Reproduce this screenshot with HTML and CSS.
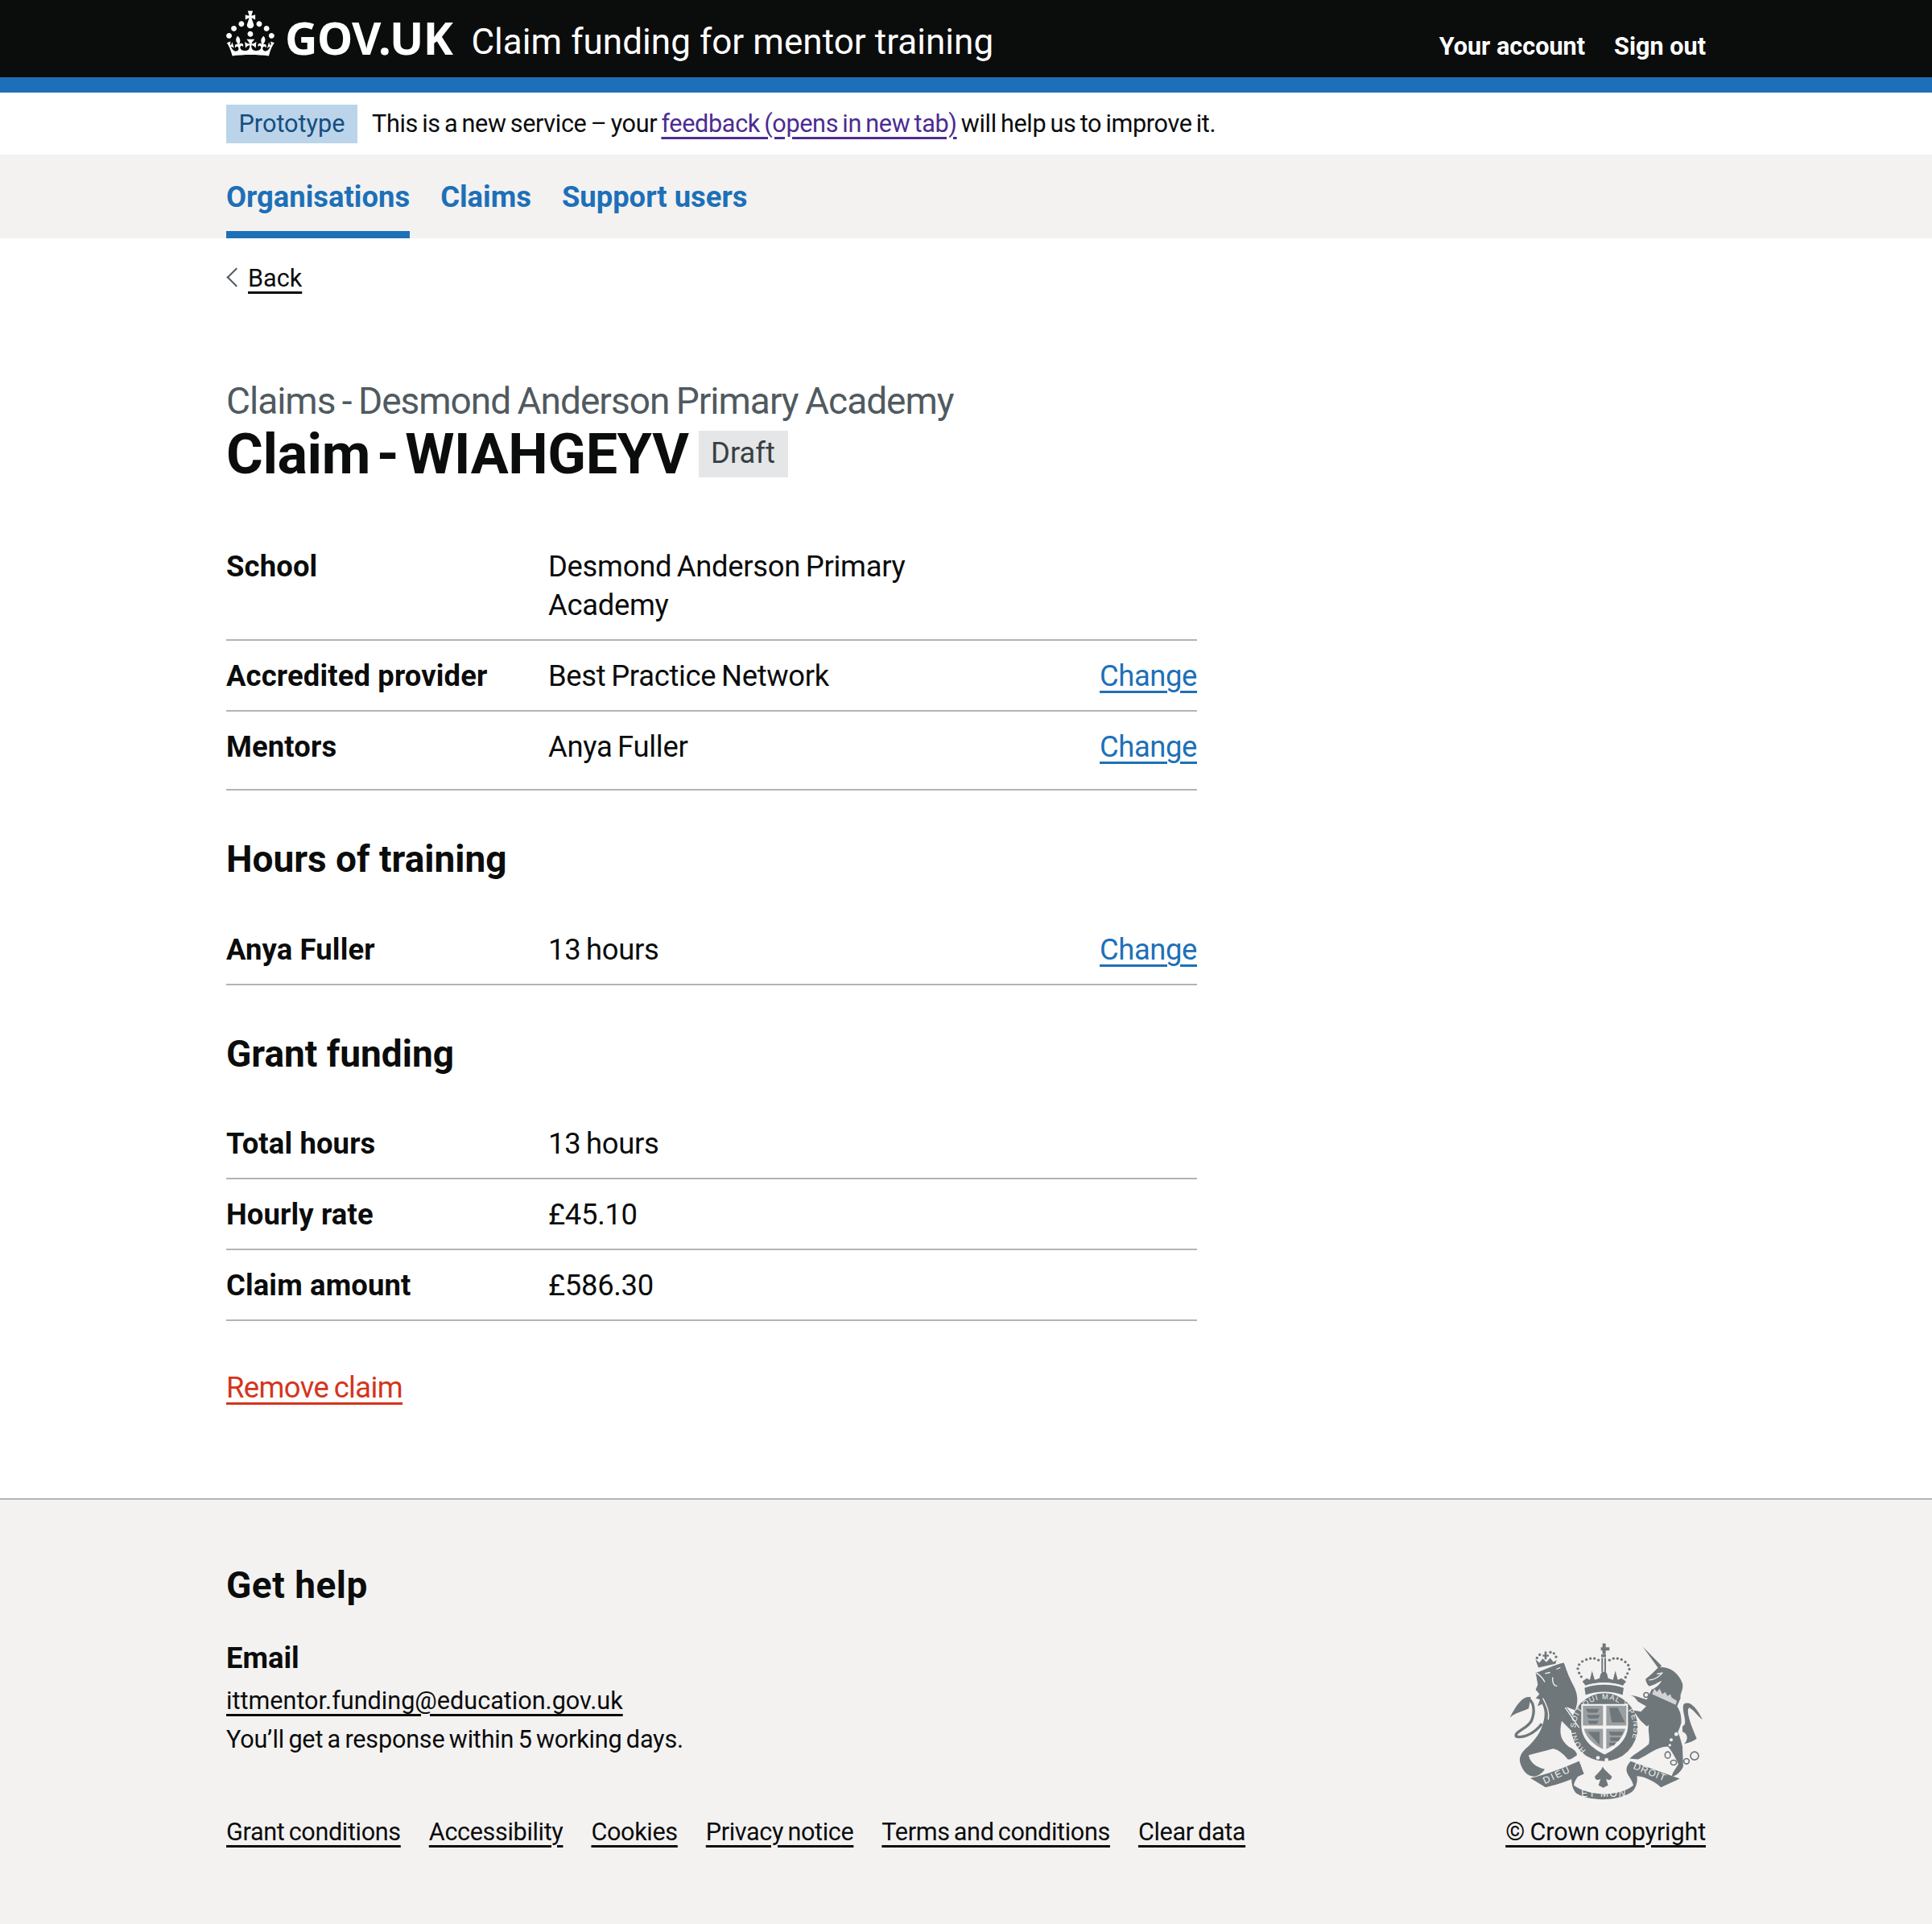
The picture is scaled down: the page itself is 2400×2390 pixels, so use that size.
FILE: index.html
```html
<!DOCTYPE html>
<html lang="en">
<head>
<meta charset="UTF-8">
<title>Claim - WIAHGEYV - Claim funding for mentor training</title>
<link rel="stylesheet" href="styles.css">
</head>
<body>
    <header class="site-header">
        <div class="container header-inner">
            <div class="header-brand">
                <svg class="crown" viewBox="0 0 32.6 30.5" aria-hidden="true"><path fill="#fff" d="M22.6 10.4c-1 .4-2-.1-2.4-1-.4-.9.1-2 1-2.4.9-.4 2 .1 2.4 1s-.1 2-1 2.4m-5.9 6.7c-.9.4-2-.1-2.4-1-.4-.9.1-2 1-2.4.9-.4 2 .1 2.4 1s-.1 2-1 2.4m10.8-3.7c-1 .4-2-.1-2.4-1-.4-.9.1-2 1-2.4.9-.4 2 .1 2.4 1s0 2-1 2.4m3.3 4.8c-1 .4-2-.1-2.4-1-.4-.9.1-2 1-2.4.9-.4 2 .1 2.4 1s-.1 2-1 2.4M17 4.7l2.3 1.2V2.5l-2.3.7-.2-.2.9-3h-3.4l.9 3-.2.2c-.1.1-2.3-.7-2.3-.7v3.4L15 4.7c.1.1.1.2.2.2l-1.3 4c-.1.2-.1.4-.1.6 0 1.1.8 2 1.9 2.2h.7c1-.2 1.9-1.1 1.9-2.2 0-.2 0-.4-.1-.6l-1.3-4c-.1-.1 0-.2.1-.2m-7.6 5.7c.9.4 2-.1 2.4-1 .4-.9-.1-2-1-2.4-.9-.4-2 .1-2.4 1s0 2 1 2.4m-5 3c.9.4 2-.1 2.4-1 .4-.9-.1-2-1-2.4-.9-.4-2 .1-2.4 1s.1 2 1 2.4m-3.2 4.8c.9.4 2-.1 2.4-1 .4-.9-.1-2-1-2.4-.9-.4-2 .1-2.4 1s0 2 1 2.4m14.8 11c4.4 0 8.6.3 12.3.8 1.1-4.5 2.4-7 3.7-8.8l-2.5-.9c.2 1.3.3 1.9 0 2.7-.4-.4-.8-1.1-1.1-2.3l-1.2 4c.7-.5 1.3-.8 2-.9-1.1 2.5-2.6 3.1-3.5 3-1.1-.2-1.7-1.2-1.5-2.1.3-1.2 1.5-1.5 2.1-.1 1.1-2.3-.8-3-2-2.3 1.9-1.9 2.1-3.5.6-5.6-2.1 1.6-2.1 3.2-1.2 5.5-1.2-1.4-3.2-.6-2.5 1.6.9-1.4 2.1-.5 1.9.8-.2 1.1-1.7 2.1-3.5 1.9-2.7-.2-2.9-2.1-2.9-3.6.7-.1 1.9.5 2.9 1.9l.4-4.3c-1.1 1.1-2.1 1.4-3.2 1.4.4-1.2 2.1-3 2.1-3h-5.4s1.7 1.9 2.1 3c-1.1 0-2.1-.2-3.2-1.4l.4 4.3c1-1.4 2.2-2 2.9-1.9-.1 1.5-.2 3.4-2.9 3.6-1.9.2-3.4-.8-3.5-1.9-.2-1.3 1-2.2 1.9-.8.7-2.3-1.2-3-2.5-1.6.9-2.2.9-3.9-1.2-5.5-1.5 2-1.3 3.7.6 5.6-1.2-.7-3.1 0-2 2.3.6-1.4 1.8-1.1 2.1.1.2.9-.3 1.9-1.5 2.1-.9.2-2.4-.5-3.5-3 .6 0 1.2.3 2 .9l-1.2-4c-.3 1.1-.7 1.9-1.1 2.3-.3-.8-.2-1.4 0-2.7l-2.5.9c1.3 1.7 2.5 4.3 3.7 8.8 3.7-.5 7.9-.8 12.3-.8"/></svg>
                <a class="logotype" href="#">GOV.UK</a>
                <a class="service-name" href="#">Claim funding for mentor training</a>
            </div>
            <nav class="header-nav">
                <a href="#">Your account</a>
                <a href="#">Sign out</a>
            </nav>
        </div>
    </header>

    <div class="container phase-banner">
        <strong class="phase-tag">Prototype</strong>
        <span class="phase-text">This is a new service – your <a href="#">feedback (opens in new tab)</a> will help us to improve it.</span>
    </div>

    <nav class="primary-nav">
        <div class="container primary-nav-inner">
            <a class="nav-item nav-current" href="#">Organisations</a>
            <a class="nav-item" href="#">Claims</a>
            <a class="nav-item" href="#">Support users</a>
        </div>
    </nav>

    <div class="container">
        <a class="back-link" href="#">Back</a>

        <main class="main">
            <span class="caption">Claims - Desmond Anderson Primary Academy</span>
            <h1 class="page-title"><span>Claim - WIAHGEYV</span><strong class="draft-tag">Draft</strong></h1>

            <dl class="summary summary-first">
                <div class="row">
                    <dt>School</dt>
                    <dd>Desmond Anderson Primary Academy</dd>
                </div>
                <div class="row">
                    <dt>Accredited provider</dt>
                    <dd>Best Practice Network</dd>
                    <dd class="action"><a href="#">Change</a></dd>
                </div>
                <div class="row row-tall">
                    <dt>Mentors</dt>
                    <dd>Anya Fuller</dd>
                    <dd class="action"><a href="#">Change</a></dd>
                </div>
            </dl>

            <h2 class="section-title">Hours of training</h2>
            <dl class="summary">
                <div class="row">
                    <dt>Anya Fuller</dt>
                    <dd>13 hours</dd>
                    <dd class="action"><a href="#">Change</a></dd>
                </div>
            </dl>

            <h2 class="section-title section-grant">Grant funding</h2>
            <dl class="summary">
                <div class="row">
                    <dt>Total hours</dt>
                    <dd>13 hours</dd>
                </div>
                <div class="row">
                    <dt>Hourly rate</dt>
                    <dd>£45.10</dd>
                </div>
                <div class="row">
                    <dt>Claim amount</dt>
                    <dd>£586.30</dd>
                </div>
            </dl>

            <a class="remove-link" href="#">Remove claim</a>
        </main>
    </div>

    <footer class="footer">
        <div class="container">
            <div class="footer-top">
                <div>
                    <h2 class="footer-title">Get help</h2>
                    <h3 class="footer-sub">Email</h3>
                    <p class="footer-text footer-email"><a href="#">ittmentor.funding@education.gov.uk</a></p>
                    <p class="footer-text">You’ll get a response within 5 working days.</p>
                </div>
            </div>
            <div class="footer-bottom">
                <ul class="footer-links">
                    <li><a href="#">Grant conditions</a></li>
                    <li><a href="#">Accessibility</a></li>
                    <li><a href="#">Cookies</a></li>
                    <li><a href="#">Privacy notice</a></li>
                    <li><a href="#">Terms and conditions</a></li>
                    <li><a href="#">Clear data</a></li>
                </ul>
                <div class="copyright">
                    <svg class="arms" viewBox="100 95 720 590" aria-hidden="true">
                        <g fill="#6f777b">
                            <!-- lion crown -->
                            <path d="M208 186 L197 155 L212 168 L224 152 L238 166 L252 150 L264 165 L276 158 L272 172 Z"/>
                            <path d="M224 138h7v-12h8v12h8v7h-8v10h-8v-10h-7z"/>
                            <circle cx="203" cy="150" r="5"/><circle cx="213" cy="138" r="5"/><circle cx="253" cy="129" r="5"/><circle cx="266" cy="133" r="5"/><circle cx="274" cy="146" r="5"/>
                            <!-- lion -->
                            <path d="M198 205 C235 195 265 175 303 168 C312 190 318 215 340 255 C355 285 358 315 345 345 L312 332 L365 405 L352 432 L335 425 C318 410 305 395 295 385 C285 430 290 455 320 480 C340 490 352 500 352 512 C340 520 330 530 318 528 C300 505 280 490 262 488 C235 495 200 505 172 512 C175 535 195 555 232 565 C222 580 210 590 190 592 C170 590 150 575 140 540 C135 520 145 500 170 480 C195 455 215 430 225 395 C235 365 232 340 222 322 L205 330 L214 305 L198 300 L212 285 L198 268 L206 250 Z"/>
                            <path d="M221 395 C195 430 150 452 125 442 C118 425 165 415 182 385 C197 350 192 308 165 300" fill="none" stroke="#6f777b" stroke-width="10"/>
                            <path d="M180 296 C145 290 122 335 102 372 C125 352 150 350 172 338 Z"/>
                            <!-- crown of the arms -->
                            <path d="M380 262 C420 246 485 246 526 262 L522 288 C480 272 425 272 384 288 Z"/>
                            <path d="M372 238 L388 226 L400 232 L408 198 L418 232 L436 226 L440 210 L446 202 L459 202 L464 210 L468 226 L486 232 L495 198 L504 232 L518 226 L535 238 L522 254 C480 238 425 238 385 254 Z"/>
                            <path d="M441 110h6v-14h12v14h14v12h-14v14h-12v-14h-6z"/>
                            <rect x="442" y="137" width="18" height="10"/>
                            <rect x="443" y="150" width="6" height="52"/><rect x="454" y="150" width="6" height="52"/>
                            <g>
                                <circle cx="432" cy="158" r="5"/><circle cx="417" cy="152" r="5"/><circle cx="402" cy="152" r="5"/><circle cx="387" cy="156" r="5"/><circle cx="372" cy="163" r="5"/><circle cx="360" cy="175" r="5"/><circle cx="355" cy="190" r="5"/><circle cx="360" cy="206" r="5"/><circle cx="368" cy="220" r="5"/>
                                <circle cx="473" cy="158" r="5"/><circle cx="488" cy="152" r="5"/><circle cx="503" cy="152" r="5"/><circle cx="518" cy="156" r="5"/><circle cx="532" cy="165" r="5"/><circle cx="543" cy="177" r="5"/><circle cx="547" cy="192" r="5"/><circle cx="540" cy="208" r="5"/><circle cx="533" cy="222" r="5"/>
                            </g>
                            <!-- unicorn -->
                            <path d="M597 108 L668 180 L655 188 Z"/>
                            <path d="M655 185 C690 180 730 200 745 245 C750 270 735 280 738 300 L725 330 C745 360 745 395 728 425 C735 445 738 450 745 480 L748 555 C738 575 722 590 705 592 C708 575 722 560 730 545 C720 525 705 495 690 480 C650 480 620 510 580 528 L548 525 C570 505 600 490 620 470 C625 445 615 420 620 400 L612 405 L590 385 L560 345 L590 350 L610 330 L578 312 C565 290 555 290 545 292 C560 285 590 300 612 305 L630 268 C645 262 660 250 668 235 C655 240 635 255 620 255 C612 245 608 238 608 228 C625 215 640 200 655 185 Z"/>
                            <path d="M745 405 C770 395 738 345 750 322 C770 308 795 330 820 380 C800 365 790 345 770 335 C758 345 772 390 798 450 C790 458 775 465 752 470 C770 450 762 430 745 425 Z"/>
                            <!-- shield and garter -->
                            <ellipse cx="454" cy="408" rx="124" ry="127"/>
                        </g>
                        <path d="M368 322 H542 V400 C542 455 500 488 455 510 C410 488 368 455 368 400 Z" fill="#f3f2f1"/>
                        <g fill="#9a9fa2">
                            <path d="M374 328 H449 V402 H374 Z"/>
                            <path d="M461 328 H536 V402 H461 Z"/>
                            <path d="M378 414 H449 V490 C415 475 384 445 378 414 Z"/>
                            <path d="M461 414 H532 C526 445 495 475 461 490 Z"/>
                        </g>
                        <g fill="#6f777b">
                            <path d="M385 340h50l-8 14h-34zM388 362h50l-8 14h-34zM392 384h40l-6 12h-28zM472 335 h32 l26 55 h-48 zM470 425 h55 l-8 14h-40zM475 446h40l-8 14h-30zM472 466h26l-8 10h-18zM392 425 l44 0 l0 50 z"/>
                        </g>
                        <circle cx="430" cy="522" r="7" fill="#f3f2f1"/>
                        <circle cx="462" cy="530" r="7" fill="#f3f2f1"/>
                        <path id="garter-arc" d="M385 494 A 108 108 0 1 1 525 494" fill="none"/>
                        <text class="arms-motto" fill="#f3f2f1"><textPath href="#garter-arc" textLength="470">HONI SOIT QUI MAL Y PENSE</textPath></text>
                        <!-- light details on the beasts and crown -->
                        <g fill="none" stroke="#f3f2f1" stroke-width="4">
                            <path d="M386 254 C425 240 480 240 520 254"/>
                            <path d="M233 208 L252 204 M275 192 L290 186 M262 222 C258 240 268 258 278 254 M308 335 L360 410 M620 232 C640 232 655 222 668 208 M650 210 L672 205"/>
                            <path d="M200 205 C215 215 225 225 232 240 M225 300 C240 330 250 350 245 380"/>
                        </g>
                        <g fill="#6f777b">
                            <!-- ribbon -->
                            <path d="M178 598 C240 585 300 560 360 535 L378 582 C340 600 290 620 235 632 Z"/>
                            <path d="M355 535 C390 570 345 590 340 625 C400 668 510 668 562 625 C555 590 515 575 552 535 L735 600 L665 632 C630 600 590 590 575 590 C580 610 570 640 555 650 C500 685 400 685 350 655 C335 640 330 615 332 590 Z" />
                            <path d="M448 555 C455 570 470 578 482 592 C480 610 465 605 460 600 L468 625 L450 634 L432 625 L440 600 C435 605 420 610 418 592 C430 578 442 570 448 555 Z"/>
                        </g>
                        <g fill="none" stroke="#6f777b" stroke-width="5">
                            <ellipse cx="690" cy="512" rx="10" ry="12"/>
                            <ellipse cx="712" cy="540" rx="11" ry="9"/>
                            <ellipse cx="760" cy="535" rx="10" ry="10"/>
                            <circle cx="790" cy="515" r="15"/>
                            <circle cx="610" cy="288" r="9"/>
                            <circle cx="600" cy="367" r="10"/>
                            <circle cx="728" cy="390" r="10"/>
                        </g>
                        <g fill="#f3f2f1">
                            <path d="M632 285 L720 325 L724 310 L705 298 L700 285 L690 292 L680 277 L670 285 L660 265 L650 277 L640 265 Z" opacity="0.75"/>
                            <circle cx="722" cy="434" r="7"/><circle cx="703" cy="455" r="6"/><circle cx="698" cy="475" r="5"/>
                            <text class="arms-ribbon" transform="translate(232 620) rotate(-25)" textLength="105">DIEU</text>
                            <text class="arms-ribbon" x="368" y="668" textLength="165">ET MON</text>
                            <text class="arms-ribbon" transform="translate(560 562) rotate(22)" textLength="125">DROIT</text>
                        </g>
                    </svg>
                    <a href="#">© Crown copyright</a>
                </div>
            </div>
        </div>
    </footer>
</body>
</html>
```

FILE: styles.css
```css
* {
    box-sizing: border-box;
}

body {
    margin: 0;
    font-family: Roboto, "Noto Sans", sans-serif;
    font-size: 36.4px;
    line-height: 48px;
    color: #0b0c0c;
    background: #fff;
}

a {
    color: inherit;
}

.container {
    width: 1838px;
    margin: 0 auto;
}

/* header */
.site-header {
    height: 115px;
    background: #0b0c0c;
    border-bottom: 19px solid #1d70b8;
    color: #fff;
}

.header-inner {
    display: flex;
    justify-content: space-between;
}

.header-brand {
    display: flex;
    align-items: flex-start;
}

.crown {
    width: 61px;
    height: 58px;
    margin-top: 13px;
}

.header-brand a {
    color: #fff;
    text-decoration: none;
}

.logotype {
    margin-left: 12px;
    font-family: "Noto Sans", sans-serif;
    font-size: 56px;
    font-weight: 700;
    line-height: 92px;
    letter-spacing: -0.6px;
    height: 96px;
}

.service-name {
    margin-left: 23px;
    font-size: 44px;
    line-height: 104px;
    height: 96px;
    letter-spacing: 0.05px;
}

.header-nav {
    display: flex;
    gap: 36px;
    padding-top: 34px;
    font-size: 30.6px;
    line-height: 48px;
    font-weight: 700;
}

.header-nav a {
    color: #fff;
    text-decoration: none;
}

/* phase banner */
.phase-banner {
    display: flex;
    align-items: center;
    height: 77px;
}

.phase-tag {
    width: 163px;
    height: 48px;
    background: #bbd4ea;
    color: #144e81;
    font-weight: 400;
    font-size: 30.6px;
    line-height: 47px;
    text-align: center;
}

.phase-text {
    margin-left: 18px;
    font-size: 30.6px;
    line-height: 46px;
    letter-spacing: -0.35px;
    word-spacing: -2px;
}

.phase-text a {
    color: #4c2c92;
    text-underline-offset: 6px;
}

/* primary nav */
.primary-nav {
    height: 104px;
    background: #f3f2f1;
}

.primary-nav-inner {
    display: flex;
    gap: 38px;
    height: 100%;
}

.nav-item {
    height: 100%;
    padding-top: 29px;
    font-weight: 700;
    color: #1d70b8;
    text-decoration: none;
}

.nav-current {
    border-bottom: 9px solid #1d70b8;
}

/* back link */
.back-link {
    display: inline-block;
    position: relative;
    margin-top: 30px;
    margin-left: 27px;
    font-size: 30.6px;
    line-height: 40px;
    text-underline-offset: 6px;
}

.back-link::before {
    content: "";
    position: absolute;
    left: -23px;
    top: 10px;
    width: 15px;
    height: 15px;
    border-left: 2px solid #505a5f;
    border-bottom: 2px solid #505a5f;
    transform: rotate(45deg);
}

/* main */
.main {
    padding-top: 102px;
    width: 1206px;
}

.caption {
    display: block;
    font-size: 46px;
    line-height: 56px;
    color: #505a5f;
    letter-spacing: -1px;
    word-spacing: -2px;
}

.page-title {
    display: flex;
    align-items: center;
    gap: 12px;
    margin: 0;
    font-size: 70px;
    line-height: 76px;
    font-weight: 700;
    letter-spacing: -0.4px;
    word-spacing: -9px;
}

.draft-tag {
    width: 111px;
    height: 58px;
    background: #e5e6e7;
    color: #383f43;
    font-size: 36.4px;
    line-height: 56px;
    font-weight: 400;
    text-align: center;
    letter-spacing: 0;
}

.summary {
    margin: 0;
}

.summary-first {
    margin-top: 58px;
}

.row {
    display: grid;
    grid-template-columns: 400px 500px 1fr;
    padding: 20px 0 18px;
    border-bottom: 2px solid #b1b4b6;
}

.row-tall {
    padding-bottom: 28px;
}

.row dt {
    font-weight: 700;
    letter-spacing: 0.15px;
}

.row dd {
    margin: 0;
    word-spacing: -2px;
    letter-spacing: -0.3px;
}

.row .action {
    text-align: right;
    letter-spacing: -0.4px;
}

.action a {
    color: #1d70b8;
    text-underline-offset: 6px;
}

.section-title {
    margin: 57px 0 41px;
    font-size: 46px;
    line-height: 56px;
    font-weight: 700;
}

.section-grant {
    margin-bottom: 40px;
}

.remove-link {
    display: inline-block;
    margin-top: 59px;
    color: #d4351c;
    letter-spacing: -0.6px;
    word-spacing: -2px;
    text-underline-offset: 6px;
}

/* footer */
.footer {
    margin-top: 113px;
    height: 530px;
    background: #f3f2f1;
    border-top: 2px solid #b1b4b6;
    padding-top: 76px;
}

.footer-title {
    margin: 0;
    font-size: 46px;
    line-height: 60px;
    font-weight: 700;
    letter-spacing: 0.5px;
}

.footer-sub {
    margin: 36px 0 4px;
    font-size: 36.4px;
    line-height: 50px;
    font-weight: 700;
}

.footer-text {
    margin: 0;
    font-size: 30.6px;
    line-height: 48px;
    letter-spacing: -0.2px;
    word-spacing: -2px;
}

.footer-email {
    letter-spacing: 0;
}

.footer-text a {
    text-underline-offset: 6px;
}

.footer-bottom {
    display: flex;
    justify-content: space-between;
    align-items: flex-end;
    margin-top: -144px;
    font-size: 30.6px;
}

.footer-links {
    display: flex;
    gap: 35px;
    margin: 0;
    padding: 0;
    list-style: none;
    letter-spacing: -0.35px;
    word-spacing: -2px;
}

.footer-links a,
.copyright a {
    text-underline-offset: 6px;
}

.copyright {
    display: flex;
    flex-direction: column;
    align-items: center;
    gap: 14px;
}

.copyright a {
    letter-spacing: -0.15px;
    word-spacing: -1px;
}

.arms {
    width: 240px;
    height: 197px;
}

.arms-motto {
    font-family: "Liberation Sans", sans-serif;
    font-size: 28px;
}

.arms-ribbon {
    font-family: "Liberation Sans", sans-serif;
    font-size: 36px;
}
```
